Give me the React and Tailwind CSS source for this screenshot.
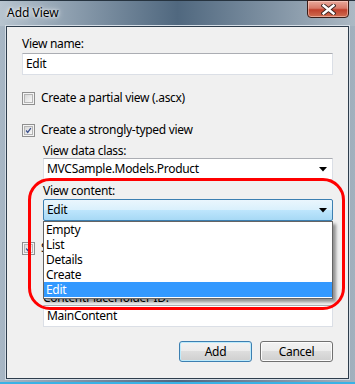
import React from 'react';

const ui = "font-['Noto_Sans',sans-serif] text-[12px] tracking-[-0.3px] text-black";

function Checkbox({ checked }) {
  return (
    <span className="w-[13px] h-[13px] shrink-0 border border-[#8f8f8f] bg-[#f4f4f4] p-[1px]">
      <span className="relative block w-full h-full border border-[#b4b4b4] bg-gradient-to-br from-[#d8d8d8] to-[#f8f8f8]">
        {checked && (
          <svg viewBox="0 0 9 9" className="absolute inset-0 w-full h-full">
            <path d="M1.5 4.5 L3.5 7 L7.5 1.5" fill="none" stroke="#3a4f8c" strokeWidth="1.6" />
          </svg>
        )}
      </span>
    </span>
  );
}

function TextBox({ value, children }) {
  return (
    <div className="h-[22px] flex items-center bg-white border border-[#dbdfe6] border-t-[#abadb3] pl-[3px]">
      {value && <span className="leading-[16px]">{value}</span>}
      {children}
    </div>
  );
}

function Arrow() {
  return (
    <svg width="8" height="5" viewBox="0 0 8 5" className="ml-auto mr-[5px]">
      <path d="M0 0 H8 L4 4.5 Z" fill="#000" />
    </svg>
  );
}

export default function App() {
  const options = ['Empty', 'List', 'Details', 'Create', 'Edit'];

  return (
    <div className={`${ui} relative w-[355px] h-[384px] overflow-hidden flex flex-col bg-gradient-to-r from-[#a8b7c5] via-[#4f6781] to-[#a3b1be]`}>
      {/* title bar */}
      <div className="h-[26px] shrink-0 flex items-start border-t border-[#26333f] bg-gradient-to-r from-[#b7c4cf] via-[#50687f] to-[#acb9c4]">
        <span className="ml-[7px] mt-[4px] leading-[16px] tracking-normal text-black [text-shadow:0_0_6px_#ffffff,0_0_3px_#ffffff]">
          Add View
        </span>
        <div className="ml-auto mr-[6px] w-[42px] h-[18px] -mt-[1px] rounded-b-[4px] border border-[#3a1d18] flex items-center justify-center bg-[linear-gradient(#e9a99c_0%,#d87a69_45%,#c0402c_55%,#cf6e52_100%)] shadow-[inset_0_0_0_1px_rgba(255,220,210,0.5)]">
          <svg width="15" height="11" viewBox="0 0 15 11">
            <path d="M2.5 1.5 L12.5 9.5 M12.5 1.5 L2.5 9.5" stroke="#3b2420" strokeWidth="4.2" strokeLinecap="square" />
            <path d="M2.5 1.5 L12.5 9.5 M12.5 1.5 L2.5 9.5" stroke="#ffffff" strokeWidth="2.4" strokeLinecap="square" />
          </svg>
        </div>
      </div>

      {/* client area */}
      <div className="mx-[6px] h-[353px] shrink-0 border border-[#2e3d4c] outline outline-1 outline-[#d4dde6] bg-[#f0f0f0] flex flex-col px-[15px]">
        <div className="mt-[9px] leading-[15px]">View name:</div>
        <div className="mt-[2px]">
          <TextBox value="Edit" />
        </div>

        <div className="mt-[15px] h-[16px] flex items-center gap-[6px]">
          <Checkbox />
          <span className="leading-[16px]">Create a partial view (.ascx)</span>
        </div>

        <div className="mt-[16px] h-[16px] flex items-center gap-[6px]">
          <Checkbox checked />
          <span className="leading-[16px]">Create a strongly-typed view</span>
        </div>

        <div className="pl-[21px] flex flex-col">
          <div className="mt-[5px] leading-[15px]">View data class:</div>
          <TextBox value="MVCSample.Models.Product">
            <Arrow />
          </TextBox>

          <div className="mt-[3px] leading-[15px]">View content:</div>
          <div className="mt-[1px] h-[22px] flex items-center pl-[3px] border border-[#3c7fb1] rounded-[2px] bg-[linear-gradient(#eaf6fd_0%,#d9f0fc_50%,#bee6fd_50%,#a7d9f5_100%)]">
            <span className="leading-[16px]">Edit</span>
            <Arrow />
          </div>
        </div>

        <div className="mt-[19px] h-[16px] flex items-center gap-[6px]">
          <Checkbox checked />
          <span className="leading-[16px]">Select master page</span>
        </div>
        <div className="pl-[21px] flex flex-col">
          <div className="mt-[3px] flex gap-[6px]">
            <div className="flex-1">
              <TextBox />
            </div>
            <div className="w-[26px] h-[22px] border border-[#707070] rounded-[3px] bg-[#e8e8e8]" />
          </div>
          <div className="mt-[9px] leading-[15px]">ContentPlaceHolder ID:</div>
          <TextBox value="MainContent" />
        </div>

        <div className="mt-[14px] flex justify-end gap-[8px]">
          <button className="w-[73px] h-[21px] rounded-[3px] border border-[#3c7fb1] shadow-[inset_0_0_0_1px_#bdebfc] bg-[linear-gradient(#f2f2f2_0%,#ebebeb_50%,#dddddd_50%,#cfcfcf_100%)] leading-[16px]">
            Add
          </button>
          <button className="w-[73px] h-[21px] rounded-[3px] border border-[#707070] shadow-[inset_0_0_0_1px_#fcfcfc] bg-[linear-gradient(#f2f2f2_0%,#ebebeb_50%,#dddddd_50%,#cfcfcf_100%)] leading-[16px]">
            Cancel
          </button>
        </div>
      </div>

      {/* bottom frame */}
      <div className="flex-1 flex flex-col justify-end">
        <div className="h-[2px] bg-[#3ab2e6]" />
      </div>

      {/* open drop-down list */}
      <div className="absolute left-[43px] top-[221px] w-[290px] h-[78px] bg-white border border-[#646464] shadow-[3px_3px_3px_rgba(0,0,0,0.4)] flex flex-col">
        {options.map((o) => (
          <div
            key={o}
            className={`h-[15px] leading-[15px] pl-[2px] ${o === 'Edit' ? 'bg-[#3399ff] text-white' : ''}`}
          >
            {o}
          </div>
        ))}
      </div>

      {/* red annotation ring */}
      <div className="absolute left-[28px] top-[178px] w-[317px] h-[132px] rounded-[22px] border-[3px] border-[#ff0000] pointer-events-none" />
    </div>
  );
}
